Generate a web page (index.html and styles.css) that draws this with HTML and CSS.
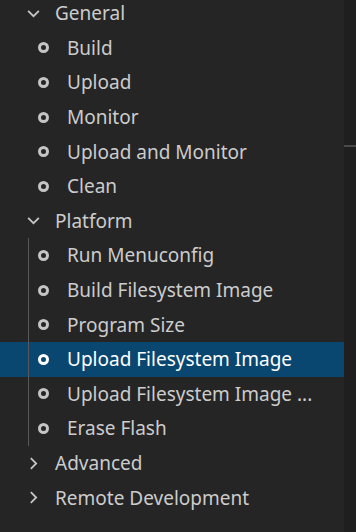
FILE: index.html
```html
<!DOCTYPE html>
<html lang="en">
<head>
    <meta charset="UTF-8">
    <title>Project Tasks</title>
    <link rel="stylesheet" href="styles.css">
</head>
<body>
    <div class="panel">
        <div class="tree">
            <!-- General -->
            <div class="row folder">
                <svg class="chev" viewBox="0 0 14 14"><path d="M2 4.5 L7 9.5 L12 4.5"/></svg>
                <span>General</span>
            </div>
            <div class="group">
                <div class="row task"><span class="dot"></span><span>Build</span></div>
                <div class="row task"><span class="dot"></span><span>Upload</span></div>
                <div class="row task"><span class="dot"></span><span>Monitor</span></div>
                <div class="row task"><span class="dot"></span><span>Upload and Monitor</span></div>
                <div class="row task"><span class="dot"></span><span>Clean</span></div>
            </div>

            <!-- Platform -->
            <div class="row folder">
                <svg class="chev" viewBox="0 0 14 14"><path d="M2 4.5 L7 9.5 L12 4.5"/></svg>
                <span>Platform</span>
            </div>
            <div class="group guide">
                <div class="row task"><span class="dot"></span><span>Run Menuconfig</span></div>
                <div class="row task"><span class="dot"></span><span>Build Filesystem Image</span></div>
                <div class="row task"><span class="dot"></span><span>Program Size</span></div>
                <div class="row task selected"><span class="dot"></span><span>Upload Filesystem Image</span></div>
                <div class="row task"><span class="dot"></span><span>Upload Filesystem Image ...</span></div>
                <div class="row task"><span class="dot"></span><span>Erase Flash</span></div>
            </div>

            <div class="row folder">
                <svg class="chev" viewBox="0 0 14 14"><path d="M4.5 2 L9.5 7 L4.5 12"/></svg>
                <span>Advanced</span>
            </div>
            <div class="row folder">
                <svg class="chev" viewBox="0 0 14 14"><path d="M4.5 2 L9.5 7 L4.5 12"/></svg>
                <span>Remote Development</span>
            </div>
        </div>
        <div class="edge"><div class="sash"></div></div>
    </div>
</body>
</html>
```

FILE: styles.css
```css
body {
    margin: 0;
    background-color: #252526;
    font-family: "Noto Sans", "Open Sans", sans-serif;
    color: #cccccc;
    overflow: hidden;
}
.panel {
    display: flex;
    height: 532px;
}
.tree {
    flex: 1;
    margin-top: -4px;
}
.row {
    height: 34.6px;
    display: flex;
    align-items: center;
    font-size: 19px;
    white-space: nowrap;
}
.folder {
    padding-left: 26px;
}
.chev {
    width: 15px;
    height: 15px;
    margin-right: 14px;
    fill: none;
    stroke: #c5c5c5;
    stroke-width: 1.7;
}
.group {
    position: relative;
}
.guide::before {
    content: "";
    position: absolute;
    left: 28px;
    top: 0;
    bottom: 0;
    width: 1px;
    background-color: #585858;
    z-index: 1;
}
.task {
    padding-left: 38px;
    position: relative;
}
.dot {
    width: 5px;
    height: 5px;
    border: 3px solid #c5c5c5;
    border-radius: 50%;
    margin-right: 18px;
}
.selected {
    background-color: #094771;
    color: #ffffff;
}
.selected .dot {
    border-color: #ffffff;
}
.edge {
    width: 12px;
    background-color: #1f1f1f;
    position: relative;
}
.sash {
    position: absolute;
    top: 145px;
    left: 0;
    right: 0;
    height: 2px;
    background-color: #4a4a4a;
}
```
